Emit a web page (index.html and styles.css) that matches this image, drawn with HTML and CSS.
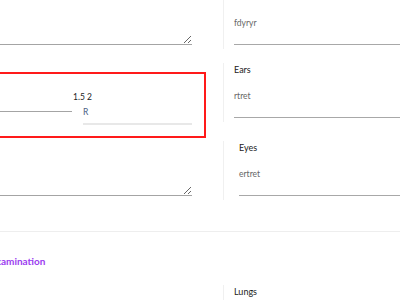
FILE: index.html
```html
<!DOCTYPE html>
<html lang="en">
<head>
    <meta charset="UTF-8">
    <title>Examination</title>
    <link rel="stylesheet" href="styles.css">
</head>
<body>
    <div class="page">
        <section class="group group-top">
            <div class="col-left">
                <textarea class="note note-top"></textarea>
                <div class="measure-box">
                    <div class="field field-plain"></div>
                    <div class="field field-select">
                        <div class="field-label">1.5 2</div>
                        <div class="select-value">R</div>
                    </div>
                </div>
                <textarea class="note note-bottom"></textarea>
            </div>
            <div class="col-right">
                <div class="exam-card card-throat">
                    <div class="exam-label">Throat</div>
                    <div class="exam-value">fdyryr</div>
                </div>
                <div class="exam-card card-ears">
                    <div class="exam-label">Ears</div>
                    <div class="exam-value">rtret</div>
                </div>
                <div class="exam-card card-eyes exam-card-inset">
                    <div class="exam-label">Eyes</div>
                    <div class="exam-value">ertret</div>
                </div>
            </div>
        </section>

        <section class="group group-exam">
            <h3 class="section-title">Examination</h3>
            <div class="exam-grid">
                <div class="col-left"></div>
                <div class="col-right">
                    <div class="exam-card card-lungs">
                        <div class="exam-label">Lungs</div>
                        <div class="exam-value"></div>
                    </div>
                </div>
            </div>
        </section>
    </div>
</body>
</html>
```

FILE: styles.css
```css
/* Base */
body {
    margin: 0;
    overflow: hidden;
    background: #fff;
    font-family: Lato, "Open Sans", sans-serif;
    color: #222;
}

.page {
    margin: -10px 0 0 -8px;
}

/* Two column rows */
.group-top,
.exam-grid {
    display: grid;
    grid-template-columns: 231px 1fr;
}

.group-top {
    padding-bottom: 31px;
    border-bottom: 1px solid #eeeeee;
}

.col-left {
    display: flex;
    flex-direction: column;
    padding-right: 17px;
}

/* Text areas */
.note {
    display: block;
    margin: 0 14px 0 0;
    padding: 4px 6px;
    border: none;
    border-bottom: 1px solid #a4a4a4;
    background: transparent;
    resize: vertical;
    outline: none;
    box-sizing: border-box;
    font-family: inherit;
}

.note-top {
    height: 55px;
}

.note-bottom {
    height: 46px;
    margin-top: 12px;
}

/* Highlighted measurement box */
.measure-box {
    margin-top: 27px;
    border: 2px solid #ff1a1a;
    padding: 0 12px 0 0;
    display: grid;
    grid-template-columns: 78px 1fr;
    column-gap: 1px;
}

.field-plain {
    height: 37px;
    border-bottom: 1px solid #a4a4a4;
    align-self: start;
}

.field-select {
    padding: 17px 0 11px;
}

.field-label {
    font-size: 8.5px;
    line-height: 12px;
    color: #222;
}

.select-value {
    margin: 3px 0 0 10px;
    padding-bottom: 5px;
    border-bottom: 2px solid #e8e8e8;
    font-size: 8.5px;
    line-height: 12px;
    color: #4a5d84;
}

/* Right column cards */
.exam-card {
    border-left: 1px solid #f0f0f0;
    padding: 1px 0 4px 10px;
}

.exam-card-inset {
    padding-left: 15px;
}

.card-ears {
    margin-top: 14px;
}

.card-eyes {
    margin-top: 19px;
}

.exam-label {
    font-size: 9px;
    line-height: 12px;
    color: #222;
}

.exam-value {
    margin-top: 14px;
    padding-bottom: 15px;
    border-bottom: 1px solid #a8a8a8;
    font-size: 8.5px;
    line-height: 12px;
    min-height: 12px;
    color: #666;
}

/* Examination section */
.group-exam {
    padding-top: 22px;
}

.section-title {
    margin: 0 0 0 -2px;
    font-size: 10px;
    line-height: 14px;
    font-weight: 700;
    color: #9b3cf0;
}

.card-lungs {
    margin-top: 17px;
}
```
